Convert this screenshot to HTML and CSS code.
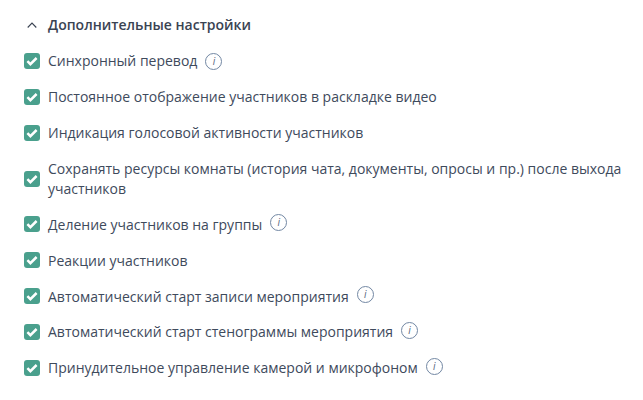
FILE: index.html
```html
<!DOCTYPE html>
<html lang="ru">
<head>
<meta charset="utf-8">
<title>Дополнительные настройки</title>
<link rel="stylesheet" href="styles.css">
</head>
<body>
<section class="panel">
  <header class="head">
    <svg class="chev" viewBox="0 0 10 6" width="10" height="6"><path d="M.7 5.5L5 1l4.3 4.5" fill="none" stroke="#3a4352" stroke-width="1.1"/></svg>
    <h2 class="title">Дополнительные настройки</h2>
  </header>
  <ul class="list">
    <li class="row"><span class="box"><svg viewBox="0 0 16 16" width="16" height="16"><path d="M3.4 8.2l3 3 6.2-6.2" fill="none" stroke="#fff" stroke-width="2.5"/></svg></span><span class="label">Синхронный перевод</span><span class="info info-low">i</span></li>
    <li class="row"><span class="box"><svg viewBox="0 0 16 16" width="16" height="16"><path d="M3.4 8.2l3 3 6.2-6.2" fill="none" stroke="#fff" stroke-width="2.5"/></svg></span><span class="label">Постоянное отображение участников в раскладке видео</span></li>
    <li class="row"><span class="box"><svg viewBox="0 0 16 16" width="16" height="16"><path d="M3.4 8.2l3 3 6.2-6.2" fill="none" stroke="#fff" stroke-width="2.5"/></svg></span><span class="label">Индикация голосовой активности участников</span></li>
    <li class="row"><span class="box"><svg viewBox="0 0 16 16" width="16" height="16"><path d="M3.4 8.2l3 3 6.2-6.2" fill="none" stroke="#fff" stroke-width="2.5"/></svg></span><span class="label">Сохранять ресурсы комнаты (история чата, документы, опросы и пр.) после выхода участников</span></li>
    <li class="row"><span class="box"><svg viewBox="0 0 16 16" width="16" height="16"><path d="M3.4 8.2l3 3 6.2-6.2" fill="none" stroke="#fff" stroke-width="2.5"/></svg></span><span class="label">Деление участников на группы</span><span class="info">i</span></li>
    <li class="row"><span class="box"><svg viewBox="0 0 16 16" width="16" height="16"><path d="M3.4 8.2l3 3 6.2-6.2" fill="none" stroke="#fff" stroke-width="2.5"/></svg></span><span class="label">Реакции участников</span></li>
    <li class="row"><span class="box"><svg viewBox="0 0 16 16" width="16" height="16"><path d="M3.4 8.2l3 3 6.2-6.2" fill="none" stroke="#fff" stroke-width="2.5"/></svg></span><span class="label">Автоматический старт записи мероприятия</span><span class="info">i</span></li>
    <li class="row"><span class="box"><svg viewBox="0 0 16 16" width="16" height="16"><path d="M3.4 8.2l3 3 6.2-6.2" fill="none" stroke="#fff" stroke-width="2.5"/></svg></span><span class="label">Автоматический старт стенограммы мероприятия</span><span class="info">i</span></li>
    <li class="row"><span class="box"><svg viewBox="0 0 16 16" width="16" height="16"><path d="M3.4 8.2l3 3 6.2-6.2" fill="none" stroke="#fff" stroke-width="2.5"/></svg></span><span class="label">Принудительное управление камерой и микрофоном</span><span class="info">i</span></li>
  </ul>
</section>
</body>
</html>
```
FILE: styles.css
```css
html, body {
  margin: 0;
  background: #fff;
}
body {
  width: 643px;
  height: 400px;
  overflow: hidden;
  font-family: "Open Sans", sans-serif;
  color: #3e4a5c;
}
.panel {
  padding: 14px 0 0 24px;
}
.head {
  display: flex;
  align-items: center;
  height: 22px;
  margin-bottom: 15px;
}
.chev {
  margin-left: 3px;
  margin-right: 11px;
}
.title {
  margin: 0;
  font-size: 14px;
  line-height: 22px;
  font-weight: 600;
  color: #3a4352;
}
.list {
  list-style: none;
  margin: 0;
  padding: 0;
  display: flex;
  flex-direction: column;
  gap: 16.4px;
}
.row {
  display: flex;
  align-items: center;
}
.box {
  flex: none;
  width: 16px;
  height: 16px;
  border-radius: 3px;
  background: #4aa08d;
  margin-right: 8px;
  display: flex;
}
.label {
  font-size: 14px;
  line-height: 1.4;
}
.info {
  flex: none;
  width: 15px;
  height: 15px;
  margin: -3px 0 0 8px;
  border: 1px solid #7287a3;
  border-radius: 50%;
  font: italic 10px/15px "Open Sans", sans-serif;
  color: #56657c;
  text-align: center;
}
.info-low {
  margin-top: 1px;
}
```
